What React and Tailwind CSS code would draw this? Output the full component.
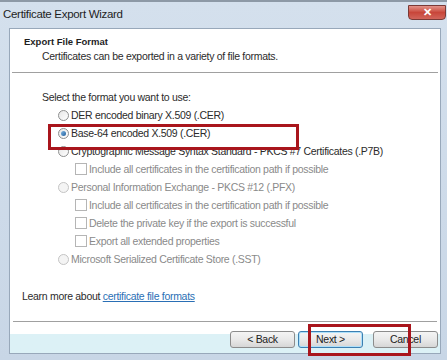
import React from 'react';

const font = { fontFamily: '"Liberation Sans", Arial, sans-serif' };

const Radio = ({ checked, disabled }) => (
  <span
    className={`inline-flex items-center justify-center w-[11px] h-[11px] rounded-full border shrink-0 ${
      disabled ? 'border-[#c4c4c4] bg-[#f4f4f4]' : 'border-[#8e8f8f] bg-gradient-to-br from-[#e6e6e6] to-[#ffffff]'
    }`}
  >
    {checked && <span className="w-[5px] h-[5px] rounded-full bg-gradient-to-br from-[#7fb6e4] to-[#1f5f9c]" />}
  </span>
);

const Check = () => (
  <span className="inline-block w-[12px] h-[12px] border border-[#b5b5b5] bg-white shrink-0" />
);

const RadioRow = ({ label, checked, disabled }) => (
  <div className="h-[18px] flex items-center pl-[16px] gap-[2px]">
    <Radio checked={checked} disabled={disabled} />
    <span className={disabled ? 'text-[#8a8a8a]' : 'text-[#2b2b2b]'}>{label}</span>
  </div>
);

const CheckRow = ({ label }) => (
  <div className="h-[18px] flex items-center pl-[33px] gap-[2px]">
    <Check />
    <span className="text-[#8a8a8a]">{label}</span>
  </div>
);

const Button = ({ children, primary }) => (
  <button
    className={`w-[65px] h-[17px] rounded-[3px] border text-[10.5px] leading-none bg-gradient-to-b from-[#f4f4f4] via-[#e9e9e9] to-[#d6d6d6] text-[#222] ${
      primary ? 'border-[#3c7fb1] shadow-[inset_0_0_0_1px_#aee0fa]' : 'border-[#8c8c8c]'
    }`}
  >
    {children}
  </button>
);

export default function App() {
  return (
    <div
      className="relative w-[447px] h-[360px] overflow-hidden flex flex-col bg-gradient-to-b from-[#d4e0ed] to-[#c8d6e6] border-t-2 border-[#8d99a6]"
      style={font}
    >
      {/* title bar */}
      <div className="h-[26px] flex items-start justify-between shrink-0">
        <span className="pl-[3px] pt-[7px] text-[11.5px] tracking-[-0.3px] leading-none text-[#1e1e1e]">Certificate Export Wizard</span>
        <div className="mt-[3px] mr-[1px] w-[38px] h-[15px] rounded-b-[4px] border border-[#7a3a36] bg-gradient-to-b from-[#e2938a] via-[#c8463a] to-[#d1645a] flex items-center justify-center">
          <span className="text-white text-[11px] font-bold leading-none">✕</span>
        </div>
      </div>

      {/* panel */}
      <div className="flex-1 ml-[9px] mr-[6px] mb-[6px] border border-[#98a8ba] bg-white flex flex-col text-[10.5px] tracking-[-0.3px] leading-none">
        <div className="h-[43px] pl-[14px] pt-[8px] shrink-0">
          <div className="font-bold text-[9.5px] tracking-normal text-[#1e1e1e]">Export File Format</div>
          <div className="pl-[18px] pt-[4px] text-[#2b2b2b]">Certificates can be exported in a variety of file formats.</div>
        </div>
        <div className="mx-[2px] border-t border-[#a0a0a0]" />

        <div className="pl-[32px] pt-[15px] shrink-0">
          <div className="h-[18px] flex items-center text-[#2b2b2b]">Select the format you want to use:</div>
          <RadioRow label="DER encoded binary X.509 (.CER)" />
          <RadioRow label="Base-64 encoded X.509 (.CER)" checked />
          <RadioRow label="Cryptographic Message Syntax Standard - PKCS #7 Certificates (.P7B)" />
          <CheckRow label="Include all certificates in the certification path if possible" />
          <RadioRow label="Personal Information Exchange - PKCS #12 (.PFX)" disabled />
          <CheckRow label="Include all certificates in the certification path if possible" />
          <CheckRow label="Delete the private key if the export is successful" />
          <CheckRow label="Export all extended properties" />
          <RadioRow label="Microsoft Serialized Certificate Store (.SST)" disabled />
        </div>

        <div className="pl-[12px] pt-[19px] h-[37px] shrink-0 text-[#2b2b2b]">
          <div className="h-[18px] flex items-center">
            Learn more about&nbsp;<span className="text-[#2a6fb5] underline">certificate file formats</span>
          </div>
        </div>
        <div className="mt-[16px] mx-[3px] border-t border-[#a0a0a0]" />

        <div className="flex-1 flex items-start justify-end pr-[2px] pt-[9px] bg-gradient-to-b from-white from-40% to-[#dcf1f6] to-40%">
          <Button>&lt; Back</Button>
          <div className="w-[3px]" />
          <Button primary>Next &gt;</Button>
          <div className="w-[10px]" />
          <Button>Cancel</Button>
        </div>
      </div>

      {/* red annotation boxes */}
      <div className="absolute left-[48px] top-[122px] w-[251px] h-[26px] border-[3px] border-[#a9151c]" />
      <div className="absolute left-[308px] top-[322px] w-[103px] h-[32px] border-[3px] border-[#a9151c]" />
    </div>
  );
}
